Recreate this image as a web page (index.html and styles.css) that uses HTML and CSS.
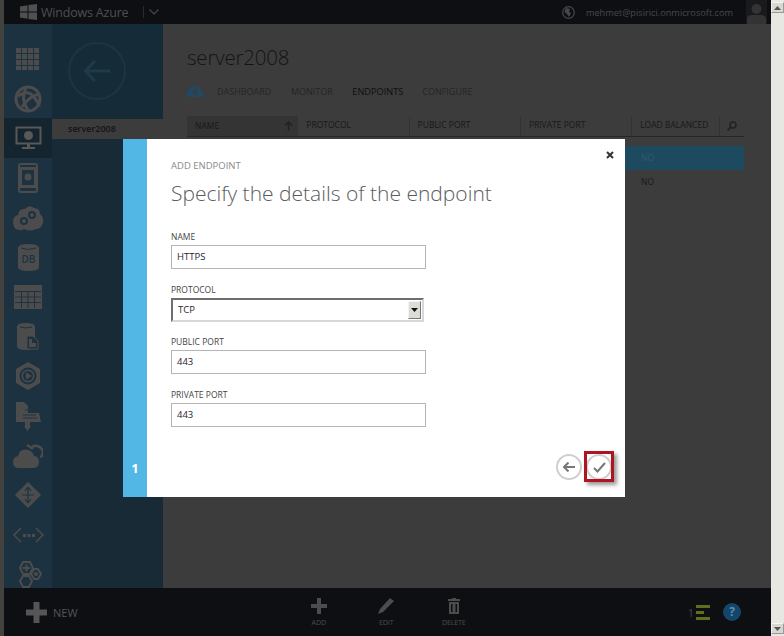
FILE: index.html
```html
<!DOCTYPE html>
<html lang="en">
<head>
  <meta charset="UTF-8">
  <title>Windows Azure - Add endpoint</title>
  <link rel="stylesheet" href="styles.css">
</head>
<body>
  <div class="edge"></div>

  <div class="app">
    <header class="topbar">
      <div class="brand">
        <svg class="brand-logo" width="17" height="16" viewBox="0 0 17 16"><path d="M0 2.500 7.500 1.200V7.500H0ZM8.500 1 17 0V7.500H8.500ZM0 8.500H7.500V14.800L0 13.500ZM8.500 8.500H17V16L8.500 15Z"/></svg>
        <span class="brand-name">Windows Azure</span>
        <span class="brand-sep"></span>
        <svg width="10" height="6" viewBox="0 0 10 6"><path d="M.5.5 5 5 9.500.5" fill="none" stroke="#4a4a4a" stroke-width="1.200"/></svg>
      </div>
      <div class="account">
        <svg width="13" height="13" viewBox="0 0 13 13"><circle cx="6.500" cy="6.500" r="5.800" fill="none" stroke="#484848" stroke-width="1.200"/><path d="M4 2 8 3 7 6 9 7 7 11 5 8 2.500 6Z" fill="#484848"/></svg>
        <span class="account-mail">mehmet@pisirici.onmicrosoft.com</span>
        <svg class="avatar" width="21" height="24" viewBox="0 0 21 24"><rect width="21" height="24" fill="#1a1a1c"/><circle cx="10.500" cy="9" r="5" fill="#333"/><path d="M1 24V19Q1 15 6 15H15Q20 15 20 19V24Z" fill="#333"/></svg>
      </div>
    </header>

    <div class="middle">
      <nav class="nav">
        <div class="nav-item">
          <svg width="24" height="24" viewBox="0 0 24 24" fill="#4c4c4c"><path d="M0 1H5V6H0ZM6 1H11V6H6ZM12 1H17V6H12ZM18 1H23V6H18ZM0 7H5V12H0ZM6 7H11V12H6ZM12 7H17V12H12ZM18 7H23V12H18ZM0 13H5V18H0ZM6 13H11V18H6ZM12 13H17V18H12ZM18 13H23V18H18ZM0 19H5V23H0ZM6 19H11V23H6ZM12 19H17V23H12ZM18 19H23V23H18Z"/></svg>
        </div>
        <div class="nav-item">
          <svg width="28" height="28" viewBox="0 0 28 28"><circle cx="14" cy="14" r="12" fill="none" stroke="#4c4c4c" stroke-width="3"/><path d="M4 11Q14 4 20 12T25 21M12 3Q6 14 14 25M8 22Q14 12 25 9" fill="none" stroke="#4c4c4c" stroke-width="3"/></svg>
        </div>
        <div class="nav-item is-active">
          <svg width="27" height="25" viewBox="0 0 27 25"><rect x="1.500" y="1.500" width="24" height="16" fill="none" stroke="#585858" stroke-width="2"/><circle cx="13.500" cy="9.500" r="4.500" fill="#585858"/><path d="M12 18H15V21H20V23H7V21H12Z" fill="#585858"/></svg>
        </div>
        <div class="nav-item">
          <svg width="20" height="30" viewBox="0 0 20 30"><rect x="1" y="1" width="18" height="28" rx="2" fill="none" stroke="#4c4c4c" stroke-width="2"/><rect x="1" y="4" width="18" height="21" fill="#4c4c4c"/><rect x="4" y="7" width="12" height="15" fill="#1c3240"/><circle cx="10" cy="14" r="3.500" fill="#4c4c4c"/></svg>
        </div>
        <div class="nav-item">
          <svg width="32" height="26" viewBox="0 0 32 26"><path d="M7 25Q1 24 1 17 1 11 6 10 7 3 13 4 17-1 22 3 28 3 28 9 32 12 31 18 29 24 24 24 18 27 12 24 9 26 7 25Z" fill="#4c4c4c"/><circle cx="12" cy="16" r="3" fill="none" stroke="#1c3240" stroke-width="2"/><circle cx="20" cy="10" r="3" fill="none" stroke="#1c3240" stroke-width="2"/></svg>
        </div>
        <div class="nav-item">
          <svg width="21" height="27" viewBox="0 0 21 27"><path d="M0 4Q0 0 10.500 0T21 4V23Q21 27 10.500 27T0 23Z" fill="#4c4c4c"/><path d="M3 4Q10 7 18 4" fill="none" stroke="#1c3240"/><text x="10.500" y="19" class="db-text">DB</text></svg>
        </div>
        <div class="nav-item">
          <svg width="28" height="24" viewBox="0 0 28 24"><rect width="28" height="24" fill="#4c4c4c"/><path d="M1 6.500H27M1 12H27M1 17.500H27M7.500 6V23M14 6V23M20.500 6V23" stroke="#1c3240"/></svg>
        </div>
        <div class="nav-item">
          <svg width="22" height="27" viewBox="0 0 22 27"><path d="M0 4Q0 0 9 0T18 4V23Q18 27 9 27T0 23Z" fill="#4c4c4c"/><path d="M3 4Q9 6 15 4" fill="none" stroke="#1c3240"/><path d="M10 13H16L21 18V26H10Z" fill="#1c3240" stroke="#4c4c4c"/><path d="M12 16H15V20H19V24H12Z" fill="#4c4c4c"/></svg>
        </div>
        <div class="nav-item">
          <svg width="26" height="28" viewBox="0 0 26 28"><path d="M13 0 25 7V21L13 28 1 21V7Z" fill="#4c4c4c"/><circle cx="13" cy="14" r="8.500" fill="#1c3240"/><circle cx="13" cy="14" r="6.500" fill="#4c4c4c"/><circle cx="13" cy="14" r="5" fill="#1c3240"/><path d="M11 10.500 17 14 11 17.500Z" fill="#4c4c4c"/></svg>
        </div>
        <div class="nav-item">
          <svg width="27" height="30" viewBox="0 0 27 30"><path d="M1 1H9L13 5V12H24L26 21H15V25H10V21H1Z" fill="#4c4c4c"/><path d="M10 9H14M8 14H21M8 17H22" stroke="#1c3240"/><path d="M9 25H16L12.500 30Z" fill="#4c4c4c"/></svg>
        </div>
        <div class="nav-item">
          <svg width="30" height="25" viewBox="0 0 30 25"><path d="M6 25Q0 25 0 19 0 14 5 13 7 5 15 7 20 8 21 13 26 13 26 19 26 25 20 25Z" fill="#4c4c4c"/><path d="M18 6Q20 2 24 3 29 4 30 9 30 13 27 14M14 2 20 6" fill="none" stroke="#4c4c4c" stroke-width="2.500"/></svg>
        </div>
        <div class="nav-item">
          <svg width="26" height="26" viewBox="0 0 26 26"><path d="M13 0 26 13 13 26 0 13Z" fill="#4c4c4c"/><path d="M13 5V21M7 13H19M13 5 10 9M13 5 16 9M13 21 10 17M13 21 16 17" stroke="#1c3240" stroke-width="1.200" fill="none"/></svg>
        </div>
        <div class="nav-item">
          <svg width="31" height="16" viewBox="0 0 31 16"><path d="M8 1 1 8 8 15M23 1 30 8 23 15" fill="none" stroke="#4c4c4c" stroke-width="1.500"/><path d="M10 7H13V10H10ZM14.500 7H17.500V10H14.500ZM19 7H22V10H19Z" fill="#4c4c4c"/></svg>
        </div>
        <div class="nav-item">
          <svg width="28" height="28" viewBox="0 0 28 28"><path d="M9 1H16L19 7 16 13H9L6 7Z" fill="none" stroke="#4c4c4c" stroke-width="2"/><path d="M8.500 7H16M12.500 3.500V10.500" stroke="#4c4c4c" stroke-width="2"/><path d="M20 8H24L27 13 24 18H20L17 13Z" fill="none" stroke="#4c4c4c" stroke-width="2"/><circle cx="22" cy="13" r="2" fill="#4c4c4c"/><path d="M9 15H15L18 20 15 26H9L6 20Z" fill="none" stroke="#4c4c4c" stroke-width="2"/></svg>
        </div>
      </nav>

      <aside class="sidebar">
        <div class="back-panel">
          <div class="back-circle">
            <svg width="26" height="22" viewBox="0 0 26 22"><path d="M11 1 1.500 11 11 21M2 11H26" fill="none" stroke="#1f3a49" stroke-width="3"/></svg>
          </div>
        </div>
        <div class="side-item">server2008</div>
      </aside>

      <main class="main">
        <h1 class="page-title">server2008</h1>
        <div class="tabs">
          <svg class="tabs-icon" width="16" height="12" viewBox="0 0 16 12"><path d="M3 12Q0 12 0 9 0 7 2 6 3 1 7 0L8 3 5 8H9L7 12ZM9 0Q12 1 13 5 16 6 16 9 16 12 13 12H9L11 8 9 4 10 3Z" fill="#1e4a68"/></svg>
          <span class="tab">DASHBOARD</span>
          <span class="tab">MONITOR</span>
          <span class="tab is-current">ENDPOINTS</span>
          <span class="tab">CONFIGURE</span>
        </div>
        <div class="grid-head">
          <div class="col col-name">NAME
            <svg width="9" height="10" viewBox="0 0 9 10"><path d="M4.500 10V1M1 4.500 4.500 1 8 4.500" fill="none" stroke="#222" stroke-width="1.500"/></svg>
          </div>
          <div class="col">PROTOCOL</div>
          <div class="col">PUBLIC PORT</div>
          <div class="col">PRIVATE PORT</div>
          <div class="col col-lb">LOAD BALANCED</div>
          <div class="col-search">
            <svg width="10" height="10" viewBox="0 0 10 10"><circle cx="6" cy="4" r="3" fill="none" stroke="#222" stroke-width="1.500"/><path d="M4 6 .5 9.500" stroke="#222" stroke-width="1.800"/></svg>
          </div>
        </div>
        <div class="grid-row is-selected"><span>NO</span></div>
        <div class="grid-row"><span>NO</span></div>
      </main>
    </div>

    <footer class="bottombar">
      <div class="new-btn">
        <svg width="21" height="21" viewBox="0 0 21 21"><path d="M7.500 0H13.500V7.500H21V13.500H13.500V21H7.500V13.500H0V7.500H7.500Z" fill="#555"/></svg>
        <span>NEW</span>
      </div>
      <div class="actions">
        <div class="action">
          <svg width="16" height="16" viewBox="0 0 16 16"><path d="M6 0H10V6H16V10H10V16H6V10H0V6H6Z" fill="#4c4c4c"/></svg>
          <span>ADD</span>
        </div>
        <div class="action">
          <svg width="16" height="16" viewBox="0 0 16 16"><path d="M12 0 16 3 5 14 0 16 2 11Z" fill="#4c4c4c"/></svg>
          <span>EDIT</span>
        </div>
        <div class="action">
          <svg width="12" height="16" viewBox="0 0 12 16"><path d="M4 0H8V1H12V3H0V1H4ZM1 4H11V16H1ZM3 6V14H4.500V6ZM7.500 6V14H9V6Z" fill="#4c4c4c" fill-rule="evenodd"/></svg>
          <span>DELETE</span>
        </div>
      </div>
      <div class="status">
        <span class="status-count">1</span>
        <div class="status-bars"><i></i><i class="short"></i><i></i></div>
        <div class="help">?</div>
      </div>
    </footer>
  </div>

  <div class="scrollbar">
    <div class="scroll-btn">
      <svg width="7" height="4" viewBox="0 0 7 4"><path d="M3.500 0 7 4H0Z" fill="#555"/></svg>
    </div>
    <div class="scroll-btn">
      <svg width="7" height="4" viewBox="0 0 7 4"><path d="M0 0H7L3.500 4Z" fill="#555"/></svg>
    </div>
  </div>

  <section class="dialog">
    <div class="dialog-step">1</div>
    <div class="dialog-body">
      <svg class="dialog-close" width="8" height="8" viewBox="0 0 8 8"><path d="M1 1 7 7M7 1 1 7" stroke="#333" stroke-width="2"/></svg>
      <div class="dialog-kicker">ADD ENDPOINT</div>
      <h2 class="dialog-title">Specify the details of the endpoint</h2>

      <label class="field-label">NAME</label>
      <div class="text-input">HTTPS</div>

      <label class="field-label">PROTOCOL</label>
      <div class="select-input">
        <span>TCP</span>
        <div class="select-btn">
          <svg width="7" height="4" viewBox="0 0 7 4"><path d="M0 0H7L3.500 4Z" fill="#111"/></svg>
        </div>
      </div>

      <label class="field-label">PUBLIC PORT</label>
      <div class="text-input">443</div>

      <label class="field-label">PRIVATE PORT</label>
      <div class="text-input">443</div>

      <div class="dialog-buttons">
        <div class="round-btn">
          <svg width="12" height="10" viewBox="0 0 12 10"><path d="M5.500 .5 1 5 5.500 9.500M1.500 5H12" fill="none" stroke="#777" stroke-width="2"/></svg>
        </div>
        <div class="round-btn">
          <svg width="13" height="11" viewBox="0 0 13 11"><path d="M1 6 4.500 9.500 12 1" fill="none" stroke="#777" stroke-width="2"/></svg>
        </div>
      </div>
      <div class="highlight"></div>
    </div>
  </section>
</body>
</html>
```

FILE: styles.css
```css
* {
  margin: 0;
  padding: 0;
  box-sizing: border-box;
}

html, body {
  height: 100%;
  overflow: hidden;
}

body {
  position: relative;
  display: flex;
  font-family: "Open Sans", "Noto Sans", sans-serif;
  background: #3c3c3c;
}

.edge {
  width: 4px;
  background: #44423f;
}

.app {
  flex: 1;
  min-width: 0;
  display: flex;
  flex-direction: column;
}

/* top bar */
.topbar {
  height: 24px;
  flex: none;
  background: #0e0f13;
  display: flex;
  align-items: center;
  justify-content: space-between;
  padding: 0 4px 0 16px;
}

.brand {
  display: flex;
  align-items: center;
}

.brand-logo {
  fill: #505050;
}

.brand-name {
  margin-left: 4px;
  font-size: 12.500px;
  letter-spacing: -0.200px;
  color: #4e4e4e;
}

.brand-sep {
  width: 1px;
  height: 12px;
  margin: 0 5px 0 15px;
  background: #2a2a2a;
}

.account {
  display: flex;
  align-items: center;
}

.account-mail {
  margin: 0 13px 0 11px;
  font-size: 9.200px;
  color: #484848;
}

/* left navigation */
.middle {
  flex: 1;
  min-height: 0;
  display: flex;
}

.nav {
  width: 48px;
  flex: none;
  padding-top: 15px;
  overflow: hidden;
  background: #1c3240;
}

.nav-item {
  height: 39.700px;
  display: flex;
  align-items: center;
  justify-content: center;
}

.nav-item.is-active {
  background: #142530;
}

.db-text {
  font-size: 10px;
  font-weight: 600;
  text-anchor: middle;
  fill: #1c3240;
}

.sidebar {
  width: 111px;
  flex: none;
  background: #172a36;
}

.back-panel {
  height: 95px;
  display: flex;
  align-items: center;
  justify-content: center;
  padding: 0 22px 2px 0;
  background: #152b38;
}

.back-circle {
  width: 58px;
  height: 58px;
  border: 2px solid #1c3543;
  border-radius: 50%;
  display: flex;
  align-items: center;
  justify-content: center;
}

.side-item {
  height: 20px;
  padding-left: 16px;
  background: #3c3c3c;
  font-size: 9px;
  font-weight: 600;
  line-height: 20px;
  color: #141414;
}

/* main content */
.main {
  flex: 1;
  min-width: 0;
  padding: 17px 27px 0 24px;
  background: #3c3c3c;
}

.page-title {
  font-size: 20.500px;
  font-weight: 300;
  line-height: 32px;
  letter-spacing: -0.200px;
  color: #141414;
}

.tabs {
  height: 20px;
  margin-top: 8px;
  display: flex;
  align-items: center;
  font-size: 9px;
  color: #252525;
}

.tabs-icon {
  margin-right: 14px;
}

.tab {
  margin-right: 19.500px;
}

.tab:nth-of-type(3) {
  margin-right: 19px;
}

.tab.is-current {
  font-size: 9.200px;
  color: #0e0e0e;
}

.grid-head {
  height: 21px;
  margin-top: 15px;
  display: flex;
  align-items: center;
  border-bottom: 1px solid #262626;
  font-size: 8.500px;
  color: #181818;
}

.col {
  width: 111.300px;
  height: 20px;
  line-height: 18px;
  padding-left: 8px;
  border-right: 1px solid #333;
  white-space: nowrap;
}

.col-name {
  display: flex;
  align-items: center;
  justify-content: space-between;
  padding-right: 4px;
  background: #343434;
}

.col-lb {
  width: 88px;
}

.col-search {
  flex: 1;
  display: flex;
  justify-content: center;
}

.grid-row {
  height: 24px;
  display: flex;
  align-items: center;
  padding: 0 0 2px 454px;
  font-size: 8.500px;
  color: #191919;
}

.grid-row.is-selected {
  margin-top: 9px;
  background: #1e4a60;
  color: #2f5a70;
}

/* bottom bar */
.bottombar {
  height: 48px;
  flex: none;
  position: relative;
  display: flex;
  align-items: center;
  background: #0e0f13;
  color: #4d4d4d;
}

.new-btn {
  width: 281px;
  display: flex;
  align-items: center;
  padding-left: 22px;
  font-size: 11px;
  color: #555;
}

.new-btn span {
  margin-left: 6px;
}

.actions {
  display: flex;
  padding-top: 1px;
}

.action {
  width: 67.500px;
  display: flex;
  flex-direction: column;
  align-items: center;
  gap: 4px;
  font-size: 7px;
  letter-spacing: -0.100px;
}

.status {
  margin-left: auto;
  display: flex;
  align-items: center;
  padding-right: 30px;
}

.status-count {
  font-size: 11px;
  color: #444;
}

.status-bars {
  width: 14px;
  margin: 0 13px 0 2px;
  display: flex;
  flex-direction: column;
  gap: 3px;
}

.status-bars i {
  display: block;
  height: 3px;
  background: #5e6e1e;
}

.status-bars i.short {
  width: 8px;
}

.help {
  width: 18px;
  height: 18px;
  border-radius: 50%;
  background: #14456a;
  text-align: center;
  font-size: 12px;
  font-weight: 700;
  line-height: 18px;
  color: #5f8dad;
}

/* scrollbar */
.scrollbar {
  width: 13px;
  flex: none;
  display: flex;
  flex-direction: column;
  justify-content: space-between;
  padding: 2px 0;
  background: #e8e8e2;
}

.scroll-btn {
  height: 11px;
  display: flex;
  align-items: center;
  justify-content: center;
  background: #d8d8d2;
  border: 1px solid #f4f4f0;
  border-right-color: #999;
  border-bottom-color: #999;
}

/* dialog */
.dialog {
  position: absolute;
  left: 123px;
  top: 139px;
  width: 502px;
  height: 358px;
  display: flex;
  background: #fff;
}

.dialog-step {
  width: 24px;
  flex: none;
  display: flex;
  align-items: flex-end;
  justify-content: center;
  padding-bottom: 20px;
  background: #52b7e5;
  font-size: 13px;
  font-weight: 700;
  color: #fff;
}

.dialog-body {
  flex: 1;
  position: relative;
  padding: 20px 0 0 24px;
}

.dialog-close {
  position: absolute;
  top: 12px;
  right: 11px;
}

.dialog-kicker {
  font-size: 9.500px;
  line-height: 13px;
  color: #8a8a8a;
}

.dialog-title {
  margin: 6px 0 22px;
  font-size: 21px;
  font-weight: 300;
  line-height: 30px;
  color: #5c5c5c;
}

.field-label {
  display: block;
  height: 13px;
  margin-bottom: 2px;
  font-size: 8.500px;
  line-height: 13px;
  color: #444;
}

.text-input {
  width: 255px;
  height: 24px;
  margin-bottom: 13.700px;
  padding-left: 5px;
  border: 1px solid #b4b4b4;
  font-size: 9.500px;
  line-height: 22px;
  color: #2a2430;
}

.select-input {
  width: 253px;
  height: 24px;
  margin-bottom: 13.700px;
  display: flex;
  align-items: center;
  justify-content: space-between;
  padding: 0 1px 0 5px;
  border: 2px solid;
  border-color: #6e6e6e #d8d8d8 #d8d8d8 #6e6e6e;
  font-size: 9.500px;
  color: #2a2430;
}

.select-btn {
  width: 13px;
  height: 18px;
  display: flex;
  align-items: center;
  justify-content: center;
  background: #dcdcd4;
  border: 1px solid;
  border-color: #f4f4f0 #777 #777 #f4f4f0;
}

.dialog-buttons {
  position: absolute;
  right: 13px;
  bottom: 17px;
  display: flex;
  gap: 4px;
}

.round-btn {
  width: 26px;
  height: 26px;
  display: flex;
  align-items: center;
  justify-content: center;
  border: 2px solid #cfcfcf;
  border-radius: 50%;
  background: #fff;
}

/* red box drawn over the confirm button */
.highlight {
  position: absolute;
  right: 11px;
  bottom: 15px;
  width: 30px;
  height: 31px;
  border: 3px solid #b01420;
  box-shadow: 3px 3px 4px rgba(0, 0, 0, 0.400);
}
```
